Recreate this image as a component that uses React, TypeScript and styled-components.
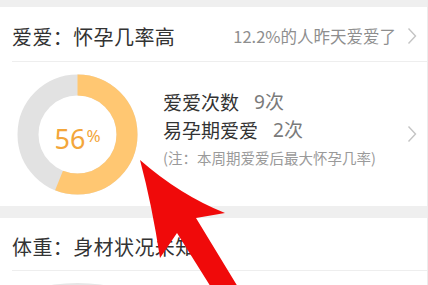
import React from "react";
import styled, { createGlobalStyle } from "styled-components";

const Global = createGlobalStyle`
  html, body { margin: 0; padding: 0; background: #ffffff; }
  body { font-family: "Noto Sans CJK SC", "Noto Sans", sans-serif; overflow: hidden; }
`;

const Page = styled.div`
  position: relative;
  width: 428px;
  height: 285px;
  overflow: hidden;
  background: #ffffff;
  box-sizing: border-box;
  border-right: 1px solid #ececec;
`;

const Band = styled.div<{ $h: number }>`
  height: ${(p) => p.$h}px;
  background: #efefef;
`;

const Section = styled.section`
  background: #ffffff;
`;

const Header = styled.div<{ $h: number }>`
  position: relative;
  height: ${(p) => p.$h}px;
  display: flex;
  align-items: center;
  padding: 3px 10px 0 12px;
  box-sizing: border-box;
  &::after {
    content: "";
    position: absolute;
    left: 12px;
    right: 0;
    bottom: 0;
    height: 1px;
    background: #eeeeee;
  }
`;

const Title = styled.div`
  font-size: 20px;
  color: #333333;
  flex: 1;
  letter-spacing: 0.4px;
`;

const Aside = styled.div`
  font-size: 16.5px;
  color: #8e8e8e;
  margin-right: 11px;
`;

const Body = styled.div<{ $h: number }>`
  height: ${(p) => p.$h}px;
  display: flex;
  align-items: center;
  padding: 0 10px 0 17px;
  box-sizing: border-box;
`;

const DonutBox = styled.div`
  position: relative;
  width: 121px;
  height: 121px;
  flex-shrink: 0;
`;

const Percent = styled.div`
  position: absolute;
  inset: 0;
  display: flex;
  align-items: center;
  justify-content: center;
  color: #f3a63a;
  font-family: "Noto Sans", "Open Sans", sans-serif;
  padding-top: 8px;
  box-sizing: border-box;
`;

const Num = styled.span`
  font-size: 27px;
  line-height: 1;
`;

const Pct = styled.span`
  font-size: 17px;
  line-height: 1;
  margin-left: 1px;
  margin-bottom: 5px;
`;

const Details = styled.div`
  flex: 1;
  margin-left: 25px;
  margin-bottom: 8px;
  line-height: 28px;
`;

const Line = styled.div`
  font-size: 19px;
  color: #333333;
  display: flex;
  gap: 15px;
`;

const Value = styled.span`
  color: #7a7a7a;
  font-family: "Noto Sans", "Noto Sans CJK SC", sans-serif;
`;

const Note = styled.div`
  font-size: 14.5px;
  color: #9a9a9a;
`;

const Chevron = () => (
  <svg width="10" height="18" viewBox="0 0 10 18">
    <polyline points="1.5,1.5 8.5,9 1.5,16.5" fill="none" stroke="#c4c4c4" strokeWidth="1.4" />
  </svg>
);

const Donut = ({ value }: { value: number }) => {
  const r = 49.5;
  const c = 2 * Math.PI * r;
  return (
    <DonutBox>
      <svg width="121" height="121" viewBox="0 0 121 121">
        <circle cx="60.5" cy="60.5" r={r} fill="none" stroke="#e2e2e2" strokeWidth="21" />
        <circle
          cx="60.5"
          cy="60.5"
          r={r}
          fill="none"
          stroke="#ffc772"
          strokeWidth="21"
          strokeDasharray={`${c * value} ${c}`}
          transform="rotate(-90 60.5 60.5)"
        />
      </svg>
      <Percent>
        <Num>56</Num>
        <Pct>%</Pct>
      </Percent>
    </DonutBox>
  );
};

const ArrowLayer = styled.svg`
  position: absolute;
  left: 0;
  top: 0;
  pointer-events: none;
`;

const PeekDonut = styled.div`
  margin: 12px 0 0 17px;
  width: 121px;
  height: 40px;
  border-radius: 50%;
  border-top: 2px solid #e6e6e6;
`;

export default function App() {
  return (
    <Page>
      <Global />
      <Band $h={7} />
      <Section>
        <Header $h={55}>
          <Title>爱爱：怀孕几率高</Title>
          <Aside>12.2%的人昨天爱爱了</Aside>
          <Chevron />
        </Header>
        <Body $h={144}>
          <Donut value={0.56} />
          <Details>
            <Line>
              <span>爱爱次数</span>
              <Value>9次</Value>
            </Line>
            <Line>
              <span>易孕期爱爱</span>
              <Value>2次</Value>
            </Line>
            <Note>(注：本周期爱爱后最大怀孕几率)</Note>
          </Details>
          <Chevron />
        </Body>
      </Section>
      <Band $h={12} />
      <Section>
        <Header $h={53}>
          <Title>体重：身材状况未知</Title>
        </Header>
        <PeekDonut />
      </Section>
      <ArrowLayer width="428" height="285" viewBox="0 0 428 285">
        <path
          d="M140,160 Q152,205 160,258 L177,233 L214,292 L241,292 L196,218 L225,213 Q180,195 140,160 Z"
          fill="#f00a0a"
        />
      </ArrowLayer>
    </Page>
  );
}
